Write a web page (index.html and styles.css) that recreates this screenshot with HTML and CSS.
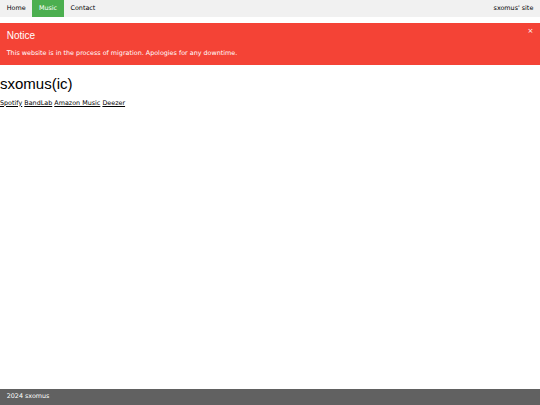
FILE: index.html
```html
<!DOCTYPE html>
<html>
<head>
    <title>sxomus(ic)</title>
    <link rel="stylesheet" href="styles.css">
</head>
<body>
    <nav class="topbar">
        <a href="#" class="bar-item">Home</a>
        <a href="#" class="bar-item active">Music</a>
        <a href="#" class="bar-item">Contact</a>
        <span class="bar-item site-name">sxomus' site</span>
    </nav>

    <div class="notice">
        <span class="notice-close">&times;</span>
        <h3>Notice</h3>
        <p>This website is in the process of migration. Apologies for any downtime.</p>
    </div>

    <main class="content">
        <h1>sxomus(ic)</h1>
        <p class="links">
            <a href="#">Spotify</a>
            <a href="#">BandLab</a>
            <a href="#">Amazon Music</a>
            <a href="#">Deezer</a>
        </p>
    </main>

    <footer class="footer">2024 sxomus</footer>
</body>
</html>
```

FILE: styles.css
```css
html, body {
    margin: 0;
    padding: 0;
}
body {
    font-family: "DejaVu Sans", Verdana, sans-serif;
    font-size: 6.4px;
    line-height: 9.4px;
    color: #000;
    min-height: 100vh;
    display: flex;
    flex-direction: column;
}
a {
    color: inherit;
}
h1, h3 {
    font-family: "Liberation Sans", Arial, sans-serif;
    font-weight: 400;
}

/* top navigation */
.topbar {
    display: flex;
    background-color: #f1f1f1;
}
.bar-item {
    padding: 3.6px 6.7px;
    text-decoration: none;
    color: #000;
}
.bar-item.active {
    background-color: #4CAF50;
    color: #fff;
}
.site-name {
    margin-left: auto;
}

/* migration notice */
.notice {
    position: relative;
    margin: 6.7px 0;
    padding: 0.1px 6.7px;
    background-color: #f44336;
    color: #fff;
}
.notice h3 {
    font-size: 10px;
    line-height: 15px;
    margin: 4.2px 0;
}
.notice p {
    margin: 6.25px 0;
}
.notice-close {
    position: absolute;
    top: 0;
    right: 0;
    padding: 3.4px 6.7px;
    font-size: 7px;
    cursor: pointer;
}

.content h1 {
    font-size: 15px;
    line-height: 22.5px;
    margin: 1.3px 0 3.7px;
}
.links {
    margin: 0;
}

.footer {
    margin-top: auto;
    padding: 3.3px 6.7px;
    background-color: #616161;
    color: #fff;
}
```
